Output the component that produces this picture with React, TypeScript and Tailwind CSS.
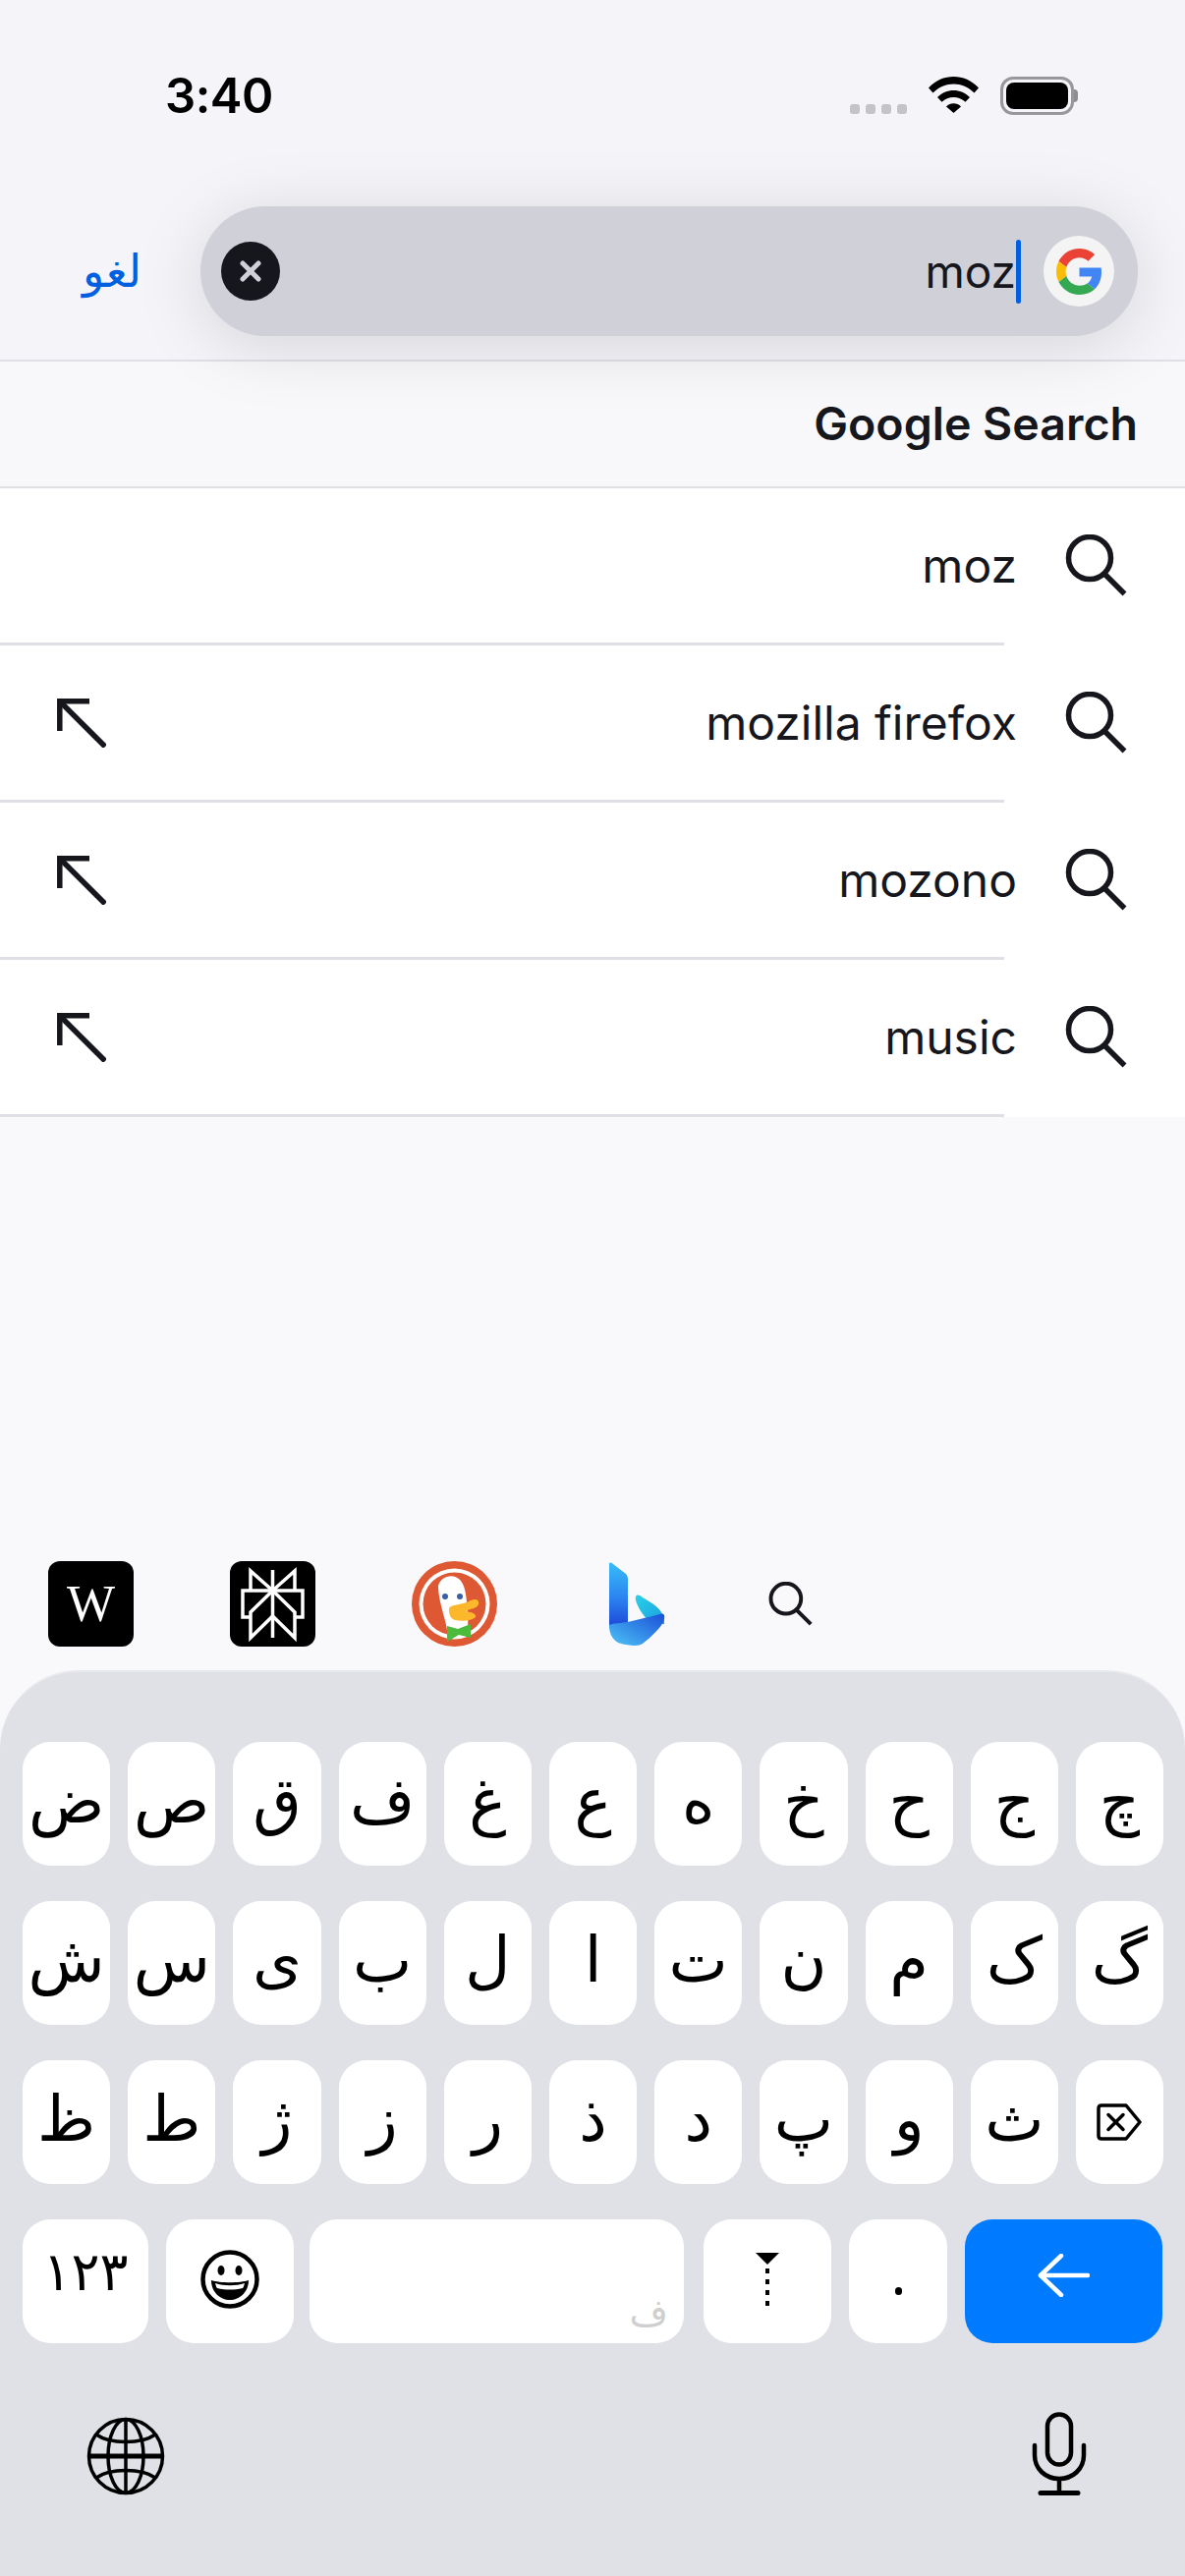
import type { ReactNode } from "react";

const rowOne = ["ض", "ص", "ق", "ف", "غ", "ع", "ه", "خ", "ح", "ج", "چ"];
const rowTwo = ["ش", "س", "ی", "ب", "ل", "ا", "ت", "ن", "م", "ک", "گ"];
const rowThree = ["ظ", "ط", "ژ", "ز", "ر", "ذ", "د", "پ", "و", "ث"];

const suggestions = [
  { text: "moz", arrow: false },
  { text: "mozilla firefox", arrow: true },
  { text: "mozono", arrow: true },
  { text: "music", arrow: true },
];

function SearchIcon({ className }: { className: string }) {
  return (
    <svg viewBox="0 0 63 63" fill="none" stroke="#16161d" strokeWidth="5.5" className={className}>
      <circle cx="25" cy="24" r="21.5" />
      <path d="M40 40L60.5 60.5" />
    </svg>
  );
}

function GoogleG() {
  return (
    <svg viewBox="0 0 48 48" className="w-[47px] h-[47px]">
      <path fill="#EA4335" d="M24 9.5c3.54 0 6.71 1.22 9.21 3.6l6.85-6.85C35.9 2.38 30.47 0 24 0 14.62 0 6.51 5.38 2.56 13.22l7.98 6.19C12.43 13.72 17.74 9.5 24 9.5z" />
      <path fill="#4285F4" d="M46.98 24.55c0-1.57-.15-3.09-.38-4.55H24v9.02h12.94c-.58 2.96-2.26 5.48-4.78 7.18l7.73 6c4.51-4.18 7.09-10.36 7.09-17.65z" />
      <path fill="#FBBC05" d="M10.53 28.59c-.48-1.45-.76-2.99-.76-4.59s.27-3.14.76-4.59l-7.98-6.19C.92 16.46 0 20.12 0 24c0 3.88.92 7.54 2.56 10.78l7.97-6.19z" />
      <path fill="#34A853" d="M24 48c6.48 0 11.93-2.13 15.89-5.81l-7.73-6c-2.15 1.45-4.92 2.3-8.16 2.3-6.26 0-11.57-4.22-13.47-9.91l-7.98 6.19C6.51 42.62 14.62 48 24 48z" />
    </svg>
  );
}

function Key({ children, className = "" }: { children: ReactNode; className?: string }) {
  return (
    <div className={`h-[126px] rounded-[28px] bg-white flex items-center justify-center ${className}`}>
      {children}
    </div>
  );
}

function LetterKey({ letter }: { letter: string }) {
  return (
    <Key className="flex-1 min-w-0 text-black text-[64px] leading-none font-['DejaVu_Sans',sans-serif] pb-[6px]">
      {letter}
    </Key>
  );
}

export default function App() {
  return (
    <div className="w-[1206px] h-[2622px] flex flex-col overflow-hidden bg-[#f9f9fc] font-['Inter',sans-serif]">
      {/* status + search header */}
      <div className="h-[366px] shrink-0 bg-[#f4f4f9] flex flex-col">
        <div className="h-[210px] shrink-0 flex justify-between pl-[168px] pr-[109px] pt-[68px]">
          <span className="text-[49px] leading-[60px] font-semibold text-black tracking-[-0.5px]">3:40</span>
          <div className="flex items-start gap-[22px] pt-[10px]">
            <div className="flex gap-[6px] pt-[28px]">
              <span className="w-[10px] h-[10px] rounded-[3px] bg-[#c4c4c6]" />
              <span className="w-[10px] h-[10px] rounded-[3px] bg-[#c4c4c6]" />
              <span className="w-[10px] h-[10px] rounded-[3px] bg-[#c4c4c6]" />
              <span className="w-[10px] h-[10px] rounded-[3px] bg-[#c4c4c6]" />
            </div>
            <svg viewBox="0 0 51 37" className="w-[51px] h-[37px]">
              <path d="M0 11.500C14 -3.800 37 -3.800 51 11.500L46.500 16.500C34.500 4.500 16.500 4.500 4.500 16.500Z" />
              <path d="M9 21C18 11.500 33 11.500 42 21L37.500 25.800C31 19.300 20 19.300 13.500 25.800Z" />
              <path d="M18 30.500C22 26.300 29 26.300 33 30.500L25.500 37Z" />
            </svg>
            <div className="flex items-center">
              <div className="w-[75px] h-[39px] rounded-[13px] border-[3px] border-[#98989c] p-[3px]">
                <div className="w-full h-full rounded-[8px] bg-black" />
              </div>
              <div className="w-[4px] h-[13px] rounded-r-[4px] bg-[#8e8e92]" />
            </div>
          </div>
        </div>
        <div className="flex items-center">
          <span className="w-[204px] shrink-0 pl-[84px] text-[46px] leading-none text-[#0060df] font-['DejaVu_Sans',sans-serif]">
            لغو
          </span>
          <div className="relative z-10 w-[954px] h-[132px] rounded-[66px] bg-[#cfd0d8] shadow-[0_10px_70px_rgba(0,0,0,0.13)] flex items-center pl-[21px] pr-[24px]">
            <div className="w-[60px] h-[60px] rounded-full bg-[#16161d] flex items-center justify-center">
              <svg viewBox="0 0 22 22" stroke="#d0d0d8" strokeWidth="5" strokeLinecap="round" className="w-[22px] h-[22px]">
                <path d="M3 3L19 19M19 3L3 19" />
              </svg>
            </div>
            <div className="flex-1 flex items-center justify-end">
              <span className="text-[46px] leading-none text-[#16161d]">moz</span>
              <span className="w-[5px] h-[65px] rounded-full bg-[#0060df]" />
            </div>
            <div className="ml-[23px] w-[72px] h-[72px] rounded-full bg-[#f4f4f4] flex items-center justify-center">
              <GoogleG />
            </div>
          </div>
        </div>
      </div>

      {/* section title */}
      <div className="h-[131px] shrink-0 border-t-2 border-b-2 border-[#dfdfe6] bg-[#f8f8fb] flex items-center justify-end pr-[48px]">
        <span className="text-[46.5px] leading-none font-semibold text-[#16161d]">Google Search</span>
      </div>

      {/* suggestions */}
      <div className="bg-white shrink-0">
        {suggestions.map((item) => (
          <div key={item.text}>
            <div className="h-[157px] flex items-center pl-[58px] pr-[59px]">
              {item.arrow && (
                <svg viewBox="0 0 50 50" fill="none" stroke="#16161d" strokeWidth="5.500" className="w-[50px] h-[50px]">
                  <path d="M2.800 33V2.800H33" />
                  <path d="M3 3L49 49" />
                </svg>
              )}
              <span className="ml-auto text-[48px] leading-none text-[#16161d]">{item.text}</span>
              <SearchIcon className="ml-[49px] w-[63px] h-[63px]" />
            </div>
            <div className="w-[1022px] h-[3px] bg-[#dfdfe6]" />
          </div>
        ))}
      </div>

      {/* search engines */}
      <div className="mt-auto h-[87px] shrink-0 flex items-center pl-[49px]">
        <div className="w-[87px] h-[87px] rounded-[12px] bg-black flex items-center justify-center text-white text-[52px] leading-none font-['Liberation_Serif',serif]">
          W
        </div>
        <div className="ml-[98px] w-[87px] h-[87px] rounded-[12px] bg-black">
          <svg viewBox="0 0 87 87" fill="none" stroke="white" strokeWidth="3.500" className="w-[87px] h-[87px]">
            <path d="M21 30V10L43.500 30L66 10V30" />
            <path d="M21 57H13V30H74V57H66" />
            <path d="M43.500 30L21 52V78L43.500 56L66 78V52Z" />
            <path d="M43.500 9V78" />
          </svg>
        </div>
        <svg viewBox="0 0 87 87" className="ml-[98px] w-[87px] h-[87px]">
          <circle cx="43.500" cy="43.500" r="43.500" fill="#de5833" />
          <circle cx="43.500" cy="43.500" r="36" fill="#fff" />
          <circle cx="43.500" cy="43.500" r="32" fill="#de5833" />
          <path d="M27 25C30 14 44 12 50 20C56 28 56 42 57 56C58 66 56 72 56 76L36 76C38 66 27 44 27 25Z" fill="#fff" />
          <circle cx="34" cy="36" r="3" fill="#3a5fa8" />
          <circle cx="49" cy="36" r="3" fill="#3a5fa8" />
          <path d="M38 49C38 44 50 45 58 41C66 37 69 40 68 44C66 49 60 48 55 51C62 52 66 54 65 57C62 60 52 62 44 60C39 58 38 54 38 49Z" fill="#fdb72b" />
          <path d="M36 66L47 69L60 64V78L48 75L36 82Z" fill="#4cba3c" />
        </svg>
        <svg viewBox="0 0 87 87" className="ml-[98px] w-[87px] h-[87px]">
          <defs>
            <linearGradient id="bingA" x1="0" y1="0" x2="0" y2="1">
              <stop offset="0" stopColor="#37bdf8" />
              <stop offset="0.55" stopColor="#2b82f0" />
              <stop offset="1" stopColor="#1b45d6" />
            </linearGradient>
            <linearGradient id="bingB" x1="0" y1="0" x2="1" y2="1">
              <stop offset="0" stopColor="#2ad0e8" />
              <stop offset="1" stopColor="#1a9fe0" />
            </linearGradient>
            <linearGradient id="bingC" x1="1" y1="0" x2="0" y2="1">
              <stop offset="0" stopColor="#1b4fd8" />
              <stop offset="1" stopColor="#4cc4f6" />
            </linearGradient>
          </defs>
          <path d="M43 40C42 34 45 33 50 37C60 43 70 48 72 60L72 64L58 64C52 56 46 50 43 40Z" fill="url(#bingB)" />
          <path d="M16 3C16 1 18 1 20 3L33 13C34 14 35 16 35 18V64L16 68Z" fill="url(#bingA)" />
          <path d="M16 66C16 64 18 64 35 62L68 54C73 52 73 58 71 62C68 68 58 78 50 84C46 87 36 86 28 84C20 82 16 74 16 66Z" fill="url(#bingC)" />
        </svg>
        <SearchIcon className="ml-[91px] w-[45px] h-[45px]" />
      </div>

      {/* keyboard */}
      <div className="mt-[24px] h-[922px] shrink-0 rounded-t-[80px] bg-[#e0e1e6] border-t-2 border-[#e8e9ed] pt-[71px] pl-[23px] pr-[22px] flex flex-col gap-[36px]">
        <div className="flex gap-[18px]">
          {rowOne.map((letter) => (
            <LetterKey key={letter} letter={letter} />
          ))}
        </div>
        <div className="flex gap-[18px]">
          {rowTwo.map((letter) => (
            <LetterKey key={letter} letter={letter} />
          ))}
        </div>
        <div className="flex gap-[18px]">
          {rowThree.map((letter) => (
            <LetterKey key={letter} letter={letter} />
          ))}
          <Key className="flex-1 min-w-0">
            <svg viewBox="0 0 46 38" fill="none" stroke="black" strokeWidth="3.500" strokeLinejoin="round" strokeLinecap="round" className="w-[46px] h-[38px]">
              <path d="M2 5C2 3 3 2 5 2H30L44 19L30 36H5C3 36 2 35 2 33Z" />
              <path d="M12 11.500L27 26.500M27 11.500L12 26.500" />
            </svg>
          </Key>
        </div>
        <div className="flex gap-[18px]">
          <Key className="w-[128px] text-black text-[54px] leading-none tracking-[-4px] font-['DejaVu_Sans',sans-serif] pb-[18px]">۱۲۳</Key>
          <Key className="w-[130px]">
            <svg viewBox="0 0 60 60" fill="none" className="w-[60px] h-[60px] mb-[4px]">
              <circle cx="30" cy="30" r="27.500" stroke="black" strokeWidth="4.500" />
              <ellipse cx="21" cy="21" rx="3.500" ry="5" fill="black" />
              <ellipse cx="39" cy="21" rx="3.500" ry="5" fill="black" />
              <path d="M11 31C20 34 40 34 49 31C49 43 40 51 30 51C20 51 11 43 11 31Z" fill="black" />
              <path d="M15 34C24 37 36 37 45 34C44 37 44 38 43 39C34 41 26 41 17 39C16 38 16 37 15 34Z" fill="white" />
            </svg>
          </Key>
          <Key className="w-[381px] -ml-[2px] !items-end !justify-end pr-[16px] pb-[12px] text-[#cfcfcf] text-[38px] leading-none font-['DejaVu_Sans',sans-serif]">
            ف
          </Key>
          <Key className="w-[130px] ml-[2px]">
            <svg viewBox="0 0 24 58" className="w-[24px] h-[58px]">
              <path d="M0 0H24L12 12Z" fill="black" />
              <path d="M12 16V58" stroke="black" strokeWidth="4" strokeDasharray="5 6" />
            </svg>
          </Key>
          <Key className="w-[100px]">
            <span className="w-[7px] h-[8px] mt-[20px] rounded-full bg-black" />
          </Key>
          <Key className="w-[201px] !bg-[#007aff]">
            <svg viewBox="0 0 53 44" fill="none" stroke="white" strokeWidth="4.500" strokeLinecap="round" strokeLinejoin="round" className="w-[53px] h-[44px] mb-[12px]">
              <path d="M24 2L3 22L24 42" />
              <path d="M3 22H51" />
            </svg>
          </Key>
        </div>
        <div className="flex justify-between items-end pl-[65px] pr-[78px] pt-[34px]">
          <svg viewBox="0 0 80 80" fill="none" stroke="black" strokeWidth="3.500" className="w-[80px] h-[80px]">
            <circle cx="40" cy="40" r="37.500" />
            <ellipse cx="40" cy="40" rx="18" ry="37.500" />
            <path d="M40 2.500V77.500" />
            <path d="M2.500 40H77.500" strokeWidth="5" />
            <path d="M10 18C24 28 56 28 70 18" />
            <path d="M10 62C24 52 56 52 70 62" />
          </svg>
          <svg viewBox="0 0 56 85" fill="none" stroke="black" strokeWidth="4.500" className="w-[56px] h-[85px]">
            <rect x="16" y="2.500" width="24" height="51" rx="12" />
            <path d="M3 34V44C3 58 14 68 28 68C42 68 53 58 53 44V34" strokeLinecap="round" />
            <path d="M28 68V82" />
            <path d="M9 82.500H47" strokeWidth="5" strokeLinecap="round" />
          </svg>
        </div>
      </div>
    </div>
  );
}
